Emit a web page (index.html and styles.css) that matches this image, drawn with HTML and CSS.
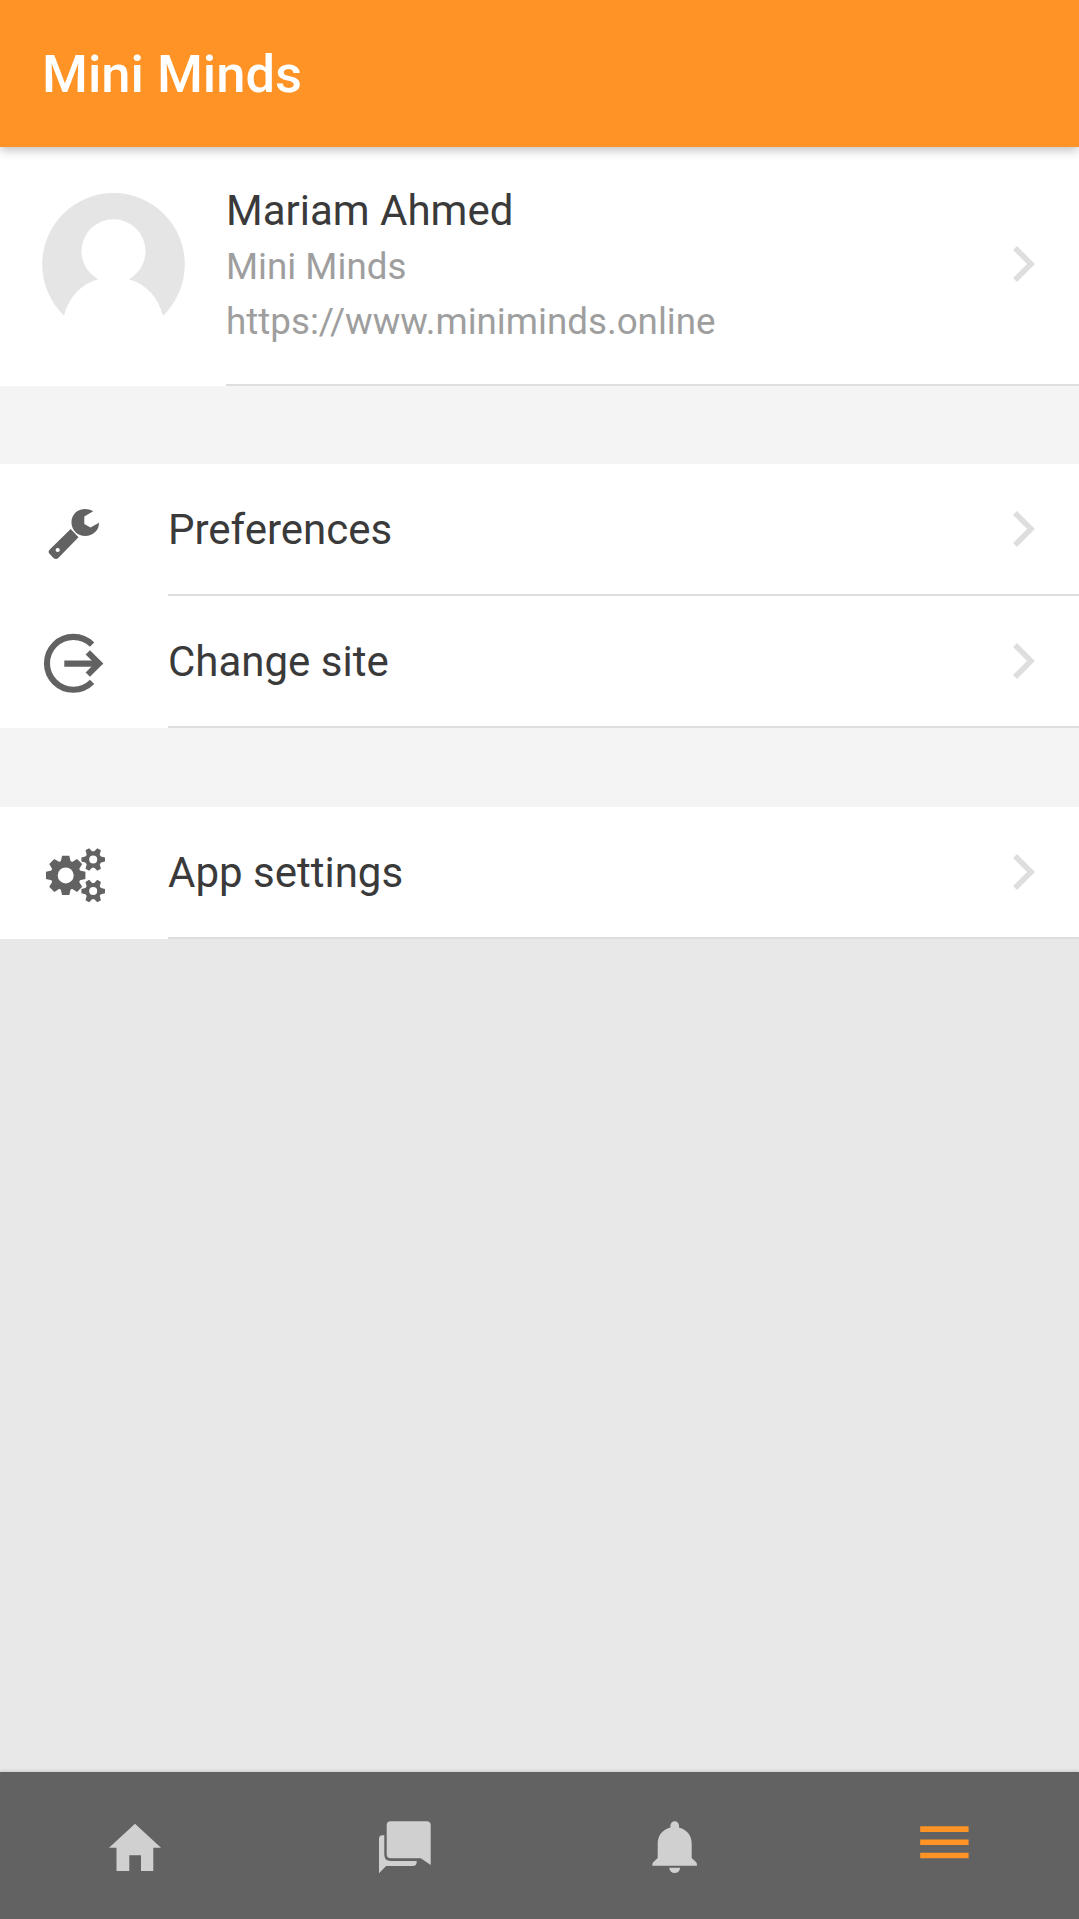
FILE: index.html
```html
<!DOCTYPE html>
<html lang="en">
<head>
    <meta charset="UTF-8">
    <meta name="viewport" content="width=device-width, initial-scale=1.0">
    <title>Mini Minds</title>
    <link rel="stylesheet" href="styles.css">
</head>
<body>
    <header class="header">
        <h1>Mini Minds</h1>
    </header>

    <main class="content">
        <a class="item profile" href="#">
            <svg class="avatar" viewBox="0 0 143 143">
                <circle cx="71.5" cy="71.3" r="71.3" fill="#e5e5e5"/>
                <circle cx="71.5" cy="58.2" r="32" fill="#fff"/>
                <path d="M22 122.5C27 104 39 91 56 86.3L60 80H83L87 86.3C104 91 116 104 121 122.5V143H22Z" fill="#fff"/>
            </svg>
            <div class="item-inner">
                <div class="label">
                    <h2>Mariam Ahmed</h2>
                    <p>Mini Minds</p>
                    <p>https://www.miniminds.online</p>
                </div>
                <svg class="arrow" viewBox="0 0 24 40"><path d="M4 4L20 20L4 36"/></svg>
            </div>
        </a>

        <div class="divider"></div>

        <a class="item" href="#">
            <svg class="icon" viewBox="0 0 70 130">
                <path d="M51.2 47.3C45.5 43.8 38 44.2 33.5 48.6C28 54 28.2 63 33.6 68.3C39 73.5 47.8 73.3 53.2 68C56 65.2 57 62.3 57 58.7L48.5 63.5L42.3 60V52.5Z"/>
                <path fill-rule="evenodd" d="M28.7 65L36.5 73.3L16.5 93.8Q14 96.3 11.5 94L7.5 89.8Q5.5 87.5 8 85.2ZM15.7 83.9A2.1 2.1 0 1 0 15.7 88.1A2.1 2.1 0 1 0 15.7 83.9Z"/>
            </svg>
            <div class="item-inner">
                <div class="label">Preferences</div>
                <svg class="arrow" viewBox="0 0 24 40"><path d="M4 4L20 20L4 36"/></svg>
            </div>
        </a>
        <a class="item" href="#">
            <svg class="icon icon-line" viewBox="0 0 70 130">
                <path d="M50.1 48.7A26.4 26.4 0 1 0 50.1 85.9"/>
                <path d="M22.3 67.6H56"/>
                <path d="M45.8 56.4L57 67.5L45.8 78.7"/>
            </svg>
            <div class="item-inner">
                <div class="label">Change site</div>
                <svg class="arrow" viewBox="0 0 24 40"><path d="M4 4L20 20L4 36"/></svg>
            </div>
        </a>

        <div class="divider divider-last"></div>

        <a class="item" href="#">
            <svg class="icon" viewBox="0 0 70 130">
                <defs>
                    <path id="big-tooth" d="M-3.6 -19.7H3.6L5.2 -13V13L3.6 19.7H-3.6L-5.2 13V-13Z"/>
                    <g id="small-gear">
                        <circle r="8.2"/>
                        <path id="small-tooth" d="M-11.8 -2.1L-7 -3.3H7L11.8 -2.1V2.1L7 3.3H-7L-11.8 2.1Z"/>
                        <use href="#small-tooth" transform="rotate(60)"/>
                        <use href="#small-tooth" transform="rotate(120)"/>
                        <circle r="4" fill="#fff"/>
                    </g>
                </defs>
                <g transform="translate(23.7 68.4)">
                    <circle r="15"/>
                    <use href="#big-tooth"/>
                    <use href="#big-tooth" transform="rotate(45)"/>
                    <use href="#big-tooth" transform="rotate(90)"/>
                    <use href="#big-tooth" transform="rotate(135)"/>
                    <circle r="8" fill="#fff"/>
                </g>
                <use href="#small-gear" transform="translate(51.2 52.5)"/>
                <use href="#small-gear" transform="translate(51.2 84.1)"/>
            </svg>
            <div class="item-inner">
                <div class="label">App settings</div>
                <svg class="arrow" viewBox="0 0 24 40"><path d="M4 4L20 20L4 36"/></svg>
            </div>
        </a>
    </main>

    <nav class="tabs">
        <a class="tab" href="#" aria-label="Home">
            <svg viewBox="0 0 68 68"><path d="M34 11.7L60 35.7H52.3V59H40V43.3H28.3V59H15.5V35.7H8Z"/></svg>
        </a>
        <a class="tab" href="#" aria-label="Messages">
            <svg viewBox="0.7 0 68 68">
                <path d="M20.4 9.3H56.4Q60.4 9.3 60.4 13.3V53L50.5 46.3H20.4Q16.4 46.3 16.4 42.3V13.3Q16.4 9.3 20.4 9.3Z"/>
                <path d="M12.2 23.3H14V42.7Q14 48.9 20.4 48.9H46.4V50Q46.4 54 42.4 54H15.8L8.7 61.2V26.8Q8.7 23.3 12.2 23.3Z"/>
            </svg>
        </a>
        <a class="tab" href="#" aria-label="Notifications">
            <svg viewBox="-0.4 0 68 68">
                <path d="M30 15.6V13.5A4.3 4.3 0 0 1 38.6 13.5V15.6C46.5 17.5 51.3 24 51.3 31.5V46L55.8 50.2Q56.8 51.3 56.6 53.7H11.9Q11.7 51.3 12.8 50.2L17.3 46V31.5C17.3 24 22 17.5 30 15.6Z"/>
                <path d="M28.9 55.7H39.7A5.4 5.4 0 0 1 28.9 55.7Z"/>
            </svg>
        </a>
        <a class="tab active" href="#" aria-label="More">
            <svg viewBox="0 0 68 68"><path d="M10.2 14.3H58.6V20H10.2ZM10.2 27.5H58.6V33.1H10.2ZM10.2 40.7H58.6V46.3H10.2Z"/></svg>
        </a>
    </nav>
</body>
</html>
```
FILE: styles.css
```css
* {
    box-sizing: border-box;
}

body {
    font-family: Roboto, sans-serif;
    margin: 0;
    height: 100vh;
    display: flex;
    flex-direction: column;
    background-color: #e8e8e8;
    color: #3a3a3a;
}

a {
    color: inherit;
    text-decoration: none;
}

.header {
    position: relative;
    z-index: 1;
    height: 147px;
    padding: 0 42px;
    display: flex;
    align-items: center;
    background-color: #ff9326;
    color: #fff;
    box-shadow: 0 3px 10px rgba(0, 0, 0, 0.26);
}

.header h1 {
    margin: 0;
    font-size: 52.5px;
    font-weight: 500;
}

.content {
    flex: 1;
}

.item {
    display: flex;
    height: 132px;
    padding-left: 42px;
    background-color: #fff;
    font-size: 42px;
}

.item-inner {
    flex: 1;
    display: flex;
    align-items: center;
    justify-content: space-between;
    padding-right: 44px;
    border-bottom: 2px solid #dedede;
}

.icon {
    width: 70px;
    height: 130px;
    margin-right: 56px;
    fill: #626262;
}

.icon-line {
    fill: none;
    stroke: #626262;
    stroke-width: 6.1;
}

.arrow {
    width: 24px;
    height: 40px;
    fill: none;
    stroke: #dedede;
    stroke-width: 5.5;
}

.divider {
    height: 78px;
    background-color: #f4f4f4;
}

.divider-last {
    height: 79px;
}

.profile {
    height: 239px;
}

.profile .arrow {
    margin-bottom: 3px;
}

.avatar {
    width: 143px;
    height: 143px;
    margin: 46px 41px 0 0;
}

.profile h2 {
    margin: 0;
    font-size: 42px;
    font-weight: 400;
    line-height: 56px;
}

.profile p {
    margin: 0;
    font-size: 36.75px;
    line-height: 55px;
    color: #9e9e9e;
}

.tabs {
    height: 147px;
    display: flex;
    background-color: #626262;
    box-shadow: 0 -1px 3px rgba(0, 0, 0, 0.15);
}

.tab {
    flex: 1;
    display: flex;
    justify-content: center;
    padding-top: 40px;
    fill: #d0d0d0;
}

.tab svg {
    width: 68px;
    height: 68px;
}

.tab.active {
    fill: #ff9326;
}
```
